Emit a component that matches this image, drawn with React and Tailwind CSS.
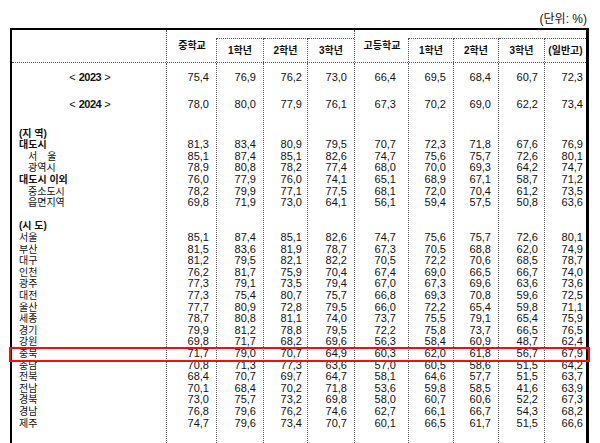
import clsx from "clsx";

const grid = "grid grid-cols-[155px_50px_47px_44px_47px_54px_45px_45px_46px_41px]";
const dot = "border-dotted border-[#555]";

// right padding of the numbers, per value column
const pads = ["pr-[7px]", "pr-[7px]", "pr-[5px]", "pr-[7px]", "pr-[12px]", "pr-[7px]", "pr-[7px]", "pr-[6px]", "pr-[3px]"];

const years = [
  { y: "2023", v: "75,4 76,9 76,2 73,0 66,4 69,5 68,4 60,7 72,3" },
  { y: "2024", v: "78,0 80,0 77,9 76,1 67,3 70,2 69,0 62,2 73,4" },
];

const rows = [
  { l: "(지 역)", b: true },
  { l: "대도시", b: true, v: "81,3 83,4 80,9 79,5 70,7 72,3 71,8 67,6 76,9" },
  { l: "서　울", i: true, v: "85,1 87,4 85,1 82,6 74,7 75,6 75,7 72,6 80,1" },
  { l: "광역시", i: true, v: "78,9 80,8 78,2 77,4 68,0 70,0 69,3 64,2 74,7" },
  { l: "대도시 이외", b: true, v: "76,0 77,9 76,0 74,1 65,1 68,9 67,1 58,7 71,2" },
  { l: "중소도시", i: true, v: "78,2 79,9 77,1 77,5 68,1 72,0 70,4 61,2 73,5" },
  { l: "읍면지역", i: true, v: "69,8 71,9 73,0 64,1 56,1 59,4 57,5 50,8 63,6" },
  { l: "" },
  { l: "(시 도)", b: true },
  { l: "서울", v: "85,1 87,4 85,1 82,6 74,7 75,6 75,7 72,6 80,1" },
  { l: "부산", v: "81,5 83,6 81,9 78,7 67,3 70,5 68,8 62,0 74,9" },
  { l: "대구", v: "81,2 79,5 82,1 82,2 70,5 72,2 70,6 68,5 78,7" },
  { l: "인천", v: "76,2 81,7 75,9 70,4 67,4 69,0 66,5 66,7 74,0" },
  { l: "광주", v: "77,3 79,1 73,5 79,4 67,0 67,3 69,6 63,6 73,6" },
  { l: "대전", v: "77,3 75,4 80,7 75,7 66,8 69,3 70,8 59,6 72,5" },
  { l: "울산", v: "77,7 80,9 72,8 79,5 66,0 72,2 65,4 59,8 71,1" },
  { l: "세종", v: "78,7 80,8 81,1 74,0 73,7 75,5 79,1 65,4 75,9" },
  { l: "경기", v: "79,9 81,2 78,8 79,5 72,2 75,8 73,7 66,5 76,5" },
  { l: "강원", v: "69,8 71,7 68,2 69,6 56,3 58,4 60,9 48,7 62,4" },
  { l: "충북", v: "71,7 79,0 70,7 64,9 60,3 62,0 61,8 56,7 67,9" },
  { l: "충남", v: "70,8 71,3 77,3 63,6 57,0 60,5 58,6 51,5 64,2" },
  { l: "전북", v: "68,4 70,7 69,7 64,7 58,1 64,6 57,7 51,5 63,7" },
  { l: "전남", v: "70,1 68,4 70,2 71,8 53,6 59,8 58,5 41,6 63,9" },
  { l: "경북", v: "73,0 75,7 73,2 69,8 58,0 60,7 60,6 52,2 67,3" },
  { l: "경남", v: "76,8 79,6 76,2 74,6 62,7 66,1 66,7 54,3 68,2" },
  { l: "제주", v: "74,7 79,6 73,4 70,7 60,1 66,5 61,7 51,5 66,6" },
];

function SubHead({ children, right = true, full = false }) {
  return (
    <div className={clsx("pt-[8px]", full && clsx("border-r", dot))}>
      <div className={clsx("h-full flex items-center justify-center pt-[1px] border-t", dot, right && "border-r")}>
        {children}
      </div>
    </div>
  );
}

function MainHead({ children }) {
  return (
    <div className="grid">
      <div className={clsx("col-start-1 row-start-1 mt-[8px] border-r", dot)} />
      <div className="col-start-1 row-start-1 flex items-center justify-center pb-[1px]">{children}</div>
    </div>
  );
}

function Header() {
  return (
    <div className={clsx(grid, "h-[33px] border-b text-[10px] font-bold leading-none", dot)}>
      <div className={clsx("border-r", dot)} />
      <MainHead>중학교</MainHead>
      <SubHead>1학년</SubHead>
      <SubHead>2학년</SubHead>
      <SubHead right={false} full>3학년</SubHead>
      <MainHead>고등학교</MainHead>
      <SubHead>1학년</SubHead>
      <SubHead>2학년</SubHead>
      <SubHead>3학년</SubHead>
      <SubHead right={false}>(일반고)</SubHead>
    </div>
  );
}

function LabelColumn() {
  return (
    <div className={clsx("flex flex-col border-r", dot)}>
      {years.map((r) => (
        <div key={r.y} className="h-[27.5px] flex items-center justify-center text-[11px] pl-[2px]">
          <span>&lt;&nbsp;</span>
          <span className="font-bold tracking-[-0.5px]">{r.y}</span>
          <span>&nbsp;&gt;</span>
        </div>
      ))}
      <div className="h-[9.7px]" />
      {rows.map((r, k) => (
        <div
          key={k}
          className={clsx(
            "h-[11.6px] leading-[11.6px] text-[10px] whitespace-pre",
            r.i ? "pl-[16px]" : "pl-[7px]",
            r.b && "font-bold"
          )}
        >
          {r.l}
        </div>
      ))}
    </div>
  );
}

function ValueColumn({ n, last }) {
  return (
    <div className={clsx("flex flex-col items-end text-[11px]", pads[n], !last && clsx("border-r", dot))}>
      {years.map((r) => (
        <div key={r.y} className="h-[27.5px] flex items-center">
          {r.v.split(" ")[n]}
        </div>
      ))}
      <div className="h-[9.7px]" />
      {rows.map((r, k) => (
        <div key={k} className="h-[11.6px] leading-[11.6px]">
          {r.v ? r.v.split(" ")[n] : ""}
        </div>
      ))}
    </div>
  );
}

export default function App() {
  return (
    <div className="relative h-[443px] w-[600px] overflow-hidden bg-white text-[#111] font-['Liberation_Sans','Noto_Sans_CJK_KR',sans-serif]">
      <div className="ml-[10px] w-[579px]">
        <div className="h-[28px] flex items-end justify-end pr-[2px] pb-[3px] text-[12px] leading-none">
          (단위: %)
        </div>
        <div className="border-t-2 border-l-2 border-r-[3px] border-black">
          <Header />
          <div className={clsx(grid, "h-[400px]")}>
            <LabelColumn />
            {pads.map((p, n) => (
              <ValueColumn key={n} n={n} last={n === pads.length - 1} />
            ))}
          </div>
        </div>
      </div>
      <div className="absolute left-[9px] top-[347px] w-[581px] h-[15px] border-2 border-[#ee1111]" />
    </div>
  );
}
